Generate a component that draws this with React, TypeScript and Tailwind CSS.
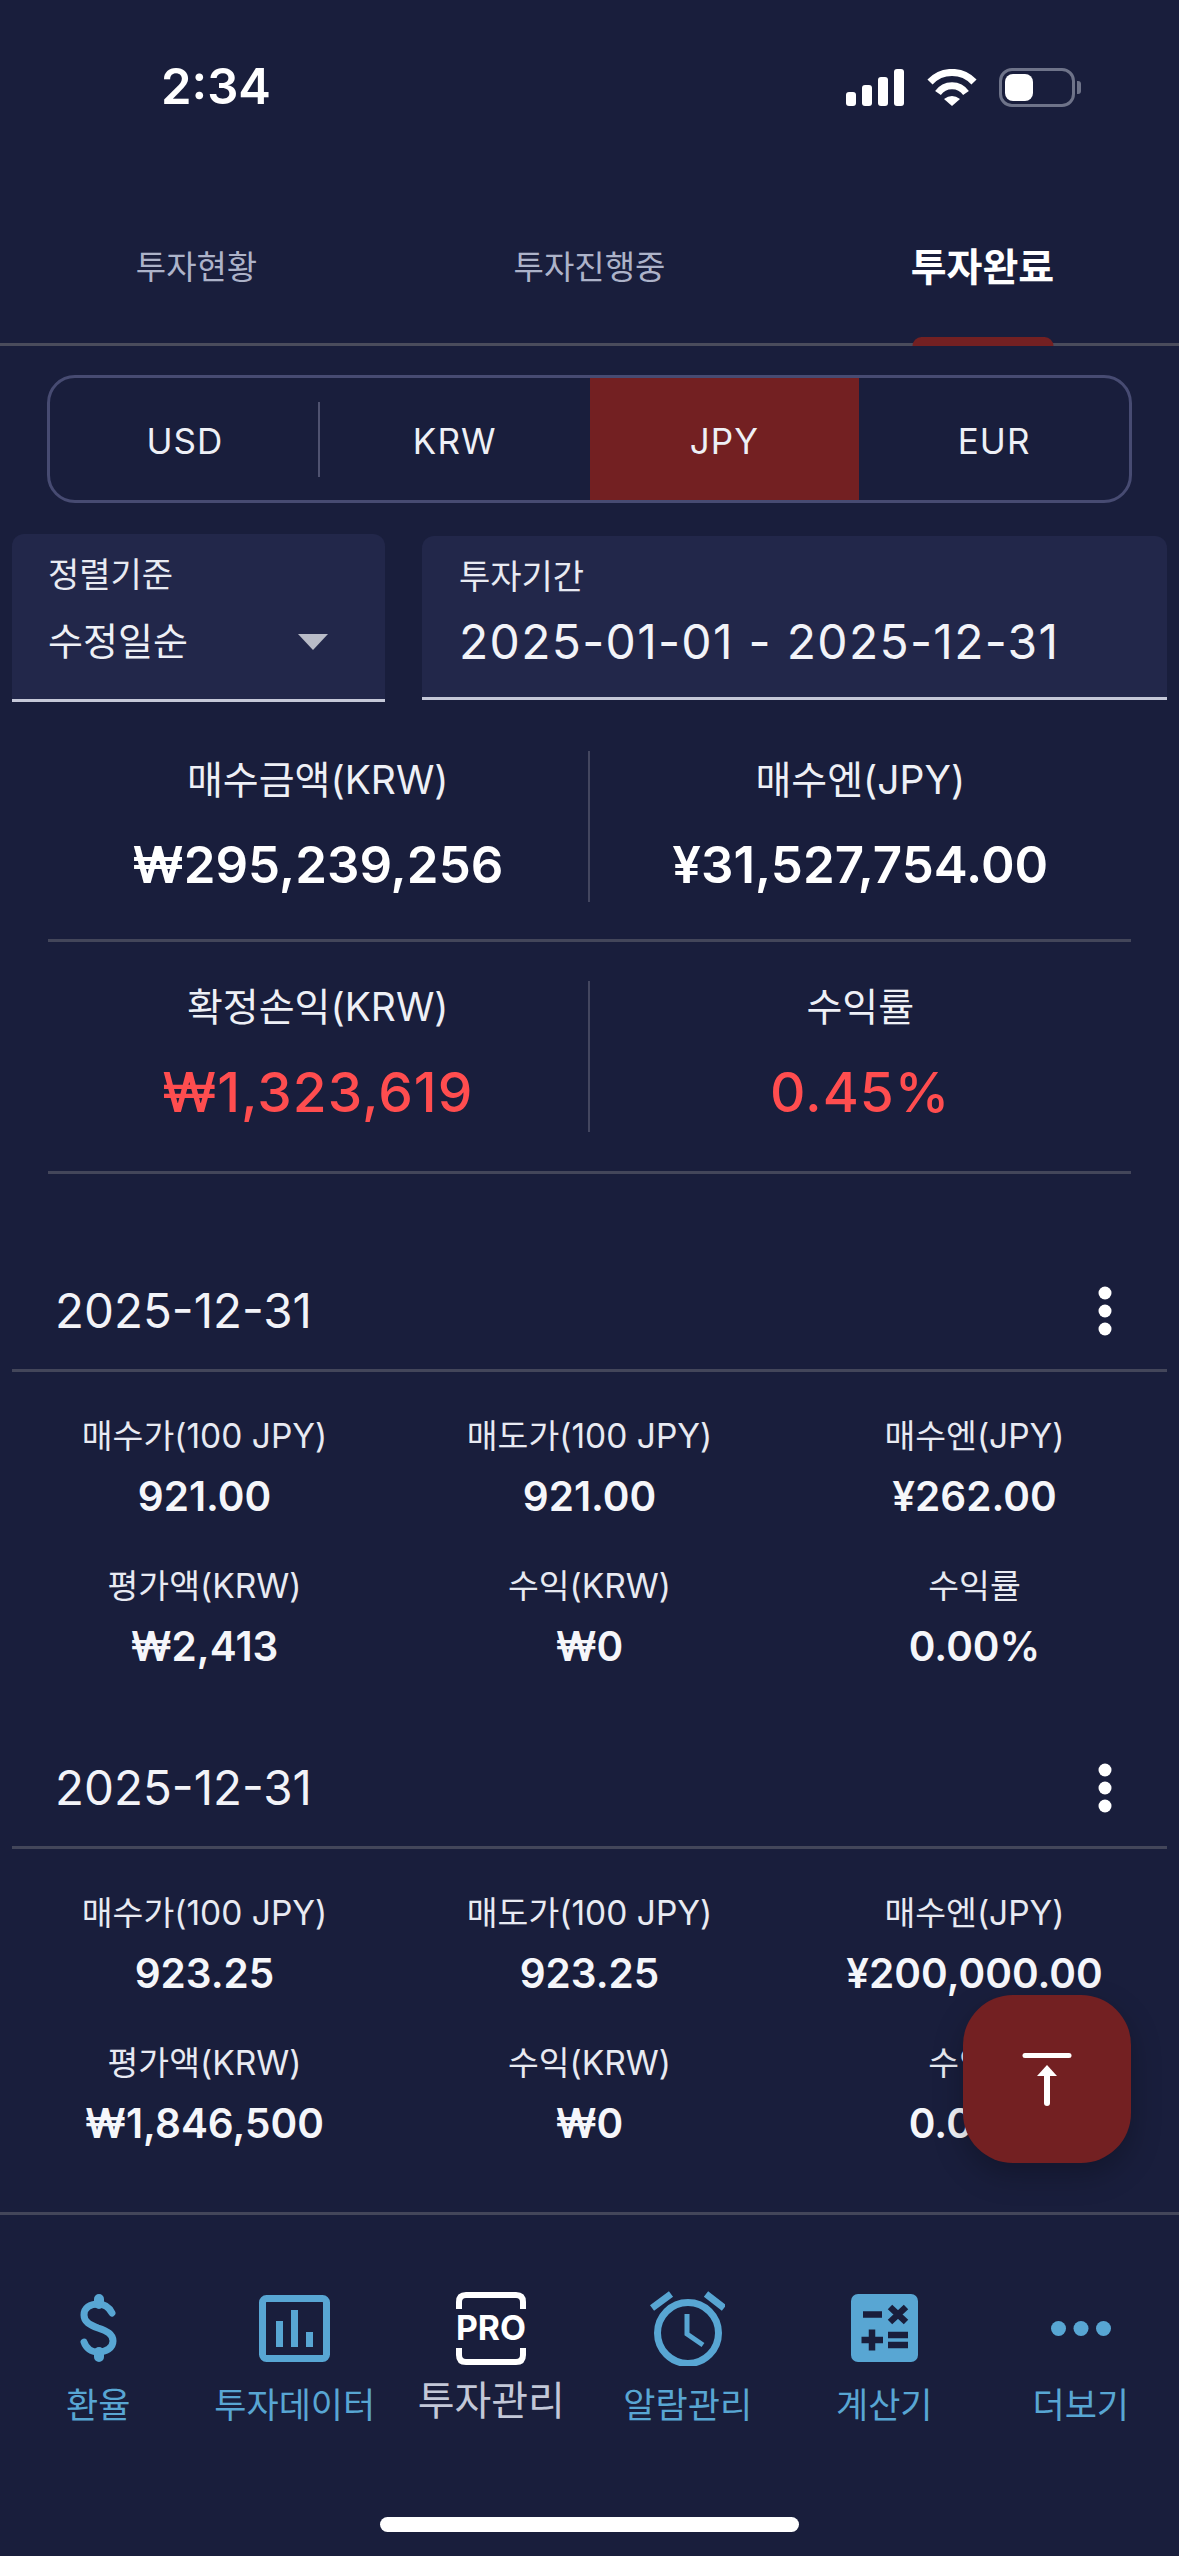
const FONT = "font-['Inter','Noto_Sans_CJK_KR',sans-serif]";

const RECORDS = [
  {
    date: '2025-12-31',
    cells: [
      { label: '매수가(100 JPY)', value: '921.00' },
      { label: '매도가(100 JPY)', value: '921.00' },
      { label: '매수엔(JPY)', value: '¥262.00' },
      { label: '평가액(KRW)', value: '₩2,413' },
      { label: '수익(KRW)', value: '₩0' },
      { label: '수익률', value: '0.00%' },
    ],
  },
  {
    date: '2025-12-31',
    cells: [
      { label: '매수가(100 JPY)', value: '923.25' },
      { label: '매도가(100 JPY)', value: '923.25' },
      { label: '매수엔(JPY)', value: '¥200,000.00' },
      { label: '평가액(KRW)', value: '₩1,846,500' },
      { label: '수익(KRW)', value: '₩0' },
      { label: '수익률', value: '0.00%' },
    ],
  },
];

function StatusIcons() {
  return (
    <div className="flex items-center">
      <svg width="58" height="37" viewBox="0 0 58 37" fill="#fff">
        <rect x="0" y="23" width="10" height="14" rx="3" />
        <rect x="16" y="16" width="10" height="21" rx="3" />
        <rect x="32" y="8" width="10" height="29" rx="3" />
        <rect x="48" y="0" width="10" height="37" rx="3" />
      </svg>
      <svg className="ml-[23px]" width="50" height="37" viewBox="0 0 50 37" fill="none" stroke="#fff" strokeWidth="7">
        <path d="M3 13 A30 30 0 0 1 47 13" />
        <path d="M11 24 A17 17 0 0 1 39 24" />
        <path d="M17 30 Q25 24 33 30 L25 37 Z" fill="#fff" stroke="none" />
      </svg>
      <div className="relative ml-[22px] h-[39px] w-[76px] rounded-[13px] border-[3px] border-[#6e7389] p-[3px]">
        <div className="h-full w-[28px] rounded-[8px] bg-white" />
        <div className="absolute top-[10px] right-[-9px] h-[13px] w-[4px] rounded-r-[3px] bg-[#6e7389]" />
      </div>
    </div>
  );
}

function Tabs() {
  return (
    <div className="grid h-[156px] grid-cols-3 border-b-[3px] border-[#4a4c5c]">
      <div className="flex items-center justify-center pt-[2px] text-[33px] text-[#adb3c9]">투자현황</div>
      <div className="flex items-center justify-center pt-[2px] text-[33px] text-[#adb3c9]">투자진행중</div>
      <div className="relative flex items-center justify-center pt-[2px] text-[39px] font-bold text-white">
        투자완료
        <div className="absolute bottom-[-3px] left-1/2 h-[9px] w-[141px] -translate-x-1/2 rounded-t-[9px] bg-[#732022]" />
      </div>
    </div>
  );
}

function CurrencySwitch() {
  return (
    <div className="mx-[47px] mt-[29px] grid h-[128px] grid-cols-4 overflow-hidden rounded-[28px] border-[3px] border-[#474b72] text-[35px] tracking-[1px] text-[#eef0f6]">
      <div className="relative flex items-center justify-center pt-[5px]">
        USD
        <div className="absolute top-[24px] right-0 h-[75px] w-[2px] bg-[#4f5270]" />
      </div>
      <div className="flex items-center justify-center pt-[5px]">KRW</div>
      <div className="flex items-center justify-center bg-[#732022] pt-[5px]">JPY</div>
      <div className="flex items-center justify-center pt-[5px]">EUR</div>
    </div>
  );
}

function Filters() {
  return (
    <div className="mt-[31px] flex items-start justify-between pr-[12px] pl-[12px]">
      <div className="h-[168px] w-[373px] rounded-t-[12px] border-b-[3px] border-[#c5c8d8] bg-[#22274a] pt-[21px] pl-[36px]">
        <div className="h-[40px] text-[34px] leading-[40px] text-[#e8eaf2]">정렬기준</div>
        <div className="mt-[11px] flex h-[70px] items-center">
          <span className="text-[38px] text-[#eef0f6]">수정일순</span>
          <svg className="mt-[2px] ml-[110px]" width="30" height="16" viewBox="0 0 30 16" fill="#b9bcc8">
            <path d="M0 0H30L15 16Z" />
          </svg>
        </div>
      </div>
      <div className="mt-[2px] h-[164px] w-[745px] rounded-t-[12px] border-b-[3px] border-[#c5c8d8] bg-[#22274a] pt-[21px] pl-[37px]">
        <div className="h-[40px] text-[34px] leading-[40px] text-[#e8eaf2]">투자기간</div>
        <div className="mt-[10px] flex h-[70px] items-center text-[48px] tracking-[1.3px] text-[#f2f3f8]">
          2025-01-01 - 2025-12-31
        </div>
      </div>
    </div>
  );
}

function SummaryRow({ items, red }: { items: { label: string; value: string }[]; red?: boolean }) {
  return (
    <div className="grid h-[151px] grid-cols-2">
      {items.map((item, i) => (
        <div key={item.label} className={`flex flex-col items-center ${i === 0 ? 'border-r-[2px] border-[#43465f]' : ''}`}>
          <div className={`h-[62px] text-[39px] leading-[62px] text-[#eef0f6] ${red ? '-mt-[5px]' : '-mt-[2px]'}`}>
            {item.label}
          </div>
          <div
            className={`h-[62px] leading-[62px] ${
              red ? 'mt-[23px] text-[55px] font-medium tracking-[1px] text-[#ff4d4f]' : 'mt-[23px] text-[51px] font-semibold text-white'
            }`}
          >
            {item.value}
          </div>
        </div>
      ))}
    </div>
  );
}

function Summary() {
  return (
    <div className="mx-[48px] mt-[49px]">
      <SummaryRow
        items={[
          { label: '매수금액(KRW)', value: '₩295,239,256' },
          { label: '매수엔(JPY)', value: '¥31,527,754.00' },
        ]}
      />
      <div className="mt-[37px] h-[3px] bg-[#43465a]" />
      <div className="mt-[39px]">
        <SummaryRow
          red
          items={[
            { label: '확정손익(KRW)', value: '₩1,323,619' },
            { label: '수익률', value: '0.45%' },
          ]}
        />
      </div>
      <div className="mt-[39px] h-[3px] bg-[#43465a]" />
    </div>
  );
}

function RecordCard({ date, cells }: (typeof RECORDS)[number]) {
  return (
    <div className="mx-[12px] h-[477px]">
      <div className="flex h-[119px] items-center justify-between border-b-[3px] border-[#43465a] pr-[55px] pl-[43px]">
        <span className="text-[47.500px] text-[#f2f3f8]">{date}</span>
        <svg width="14" height="50" viewBox="0 0 14 50" fill="#fff">
          <circle cx="7" cy="7" r="6.5" />
          <circle cx="7" cy="25" r="6.5" />
          <circle cx="7" cy="43" r="6.5" />
        </svg>
      </div>
      <div className="grid grid-cols-3 gap-y-[29px] pt-[39px]">
        {cells.map((cell, i) => (
          <div key={i} className="flex flex-col items-center">
            <div className="h-[50px] text-[33.500px] leading-[50px] text-[#e8eaf2]">{cell.label}</div>
            <div className="h-[71px] text-[40.500px] leading-[71px] font-semibold text-[#f5f6fa]">{cell.value}</div>
          </div>
        ))}
      </div>
    </div>
  );
}

function DollarIcon() {
  return (
    <svg width="37" height="68" viewBox="0 0 37 68" fill="none" stroke="#58a6d3" strokeLinecap="round">
      <path strokeWidth="7" d="M32 19 C29 13 24 10 18 10 C10 10 4 14 4 21 C4 28 10 31 18 34 C27 37 33 40 33 47 C33 54 26 58 18 58 C11 58 6 54 4 48" />
      <path strokeWidth="10" d="M19 5 V10 M19 58 V63" />
    </svg>
  );
}

function ChartIcon() {
  return (
    <svg width="71" height="67" viewBox="0 0 71 67" fill="#58a6d3">
      <rect x="3.5" y="3.5" width="64" height="60" rx="4" fill="none" stroke="#58a6d3" strokeWidth="7" />
      <rect x="17" y="26" width="7" height="26" />
      <rect x="32" y="15" width="7" height="37" />
      <rect x="47" y="37" width="7" height="15" />
    </svg>
  );
}

function ProIcon() {
  return (
    <svg width="70" height="73" viewBox="0 0 70 73" fill="none" stroke="#fff" strokeWidth="6">
      <path d="M3 17 V10 Q3 3 10 3 H60 Q67 3 67 10 V17" />
      <path d="M3 56 V63 Q3 70 10 70 H60 Q67 70 67 63 V56" />
      <text x="0" y="48" textLength="70" lengthAdjust="spacingAndGlyphs" fill="#fff" stroke="none" fontSize="34" fontWeight="700" fontFamily="Inter, sans-serif">
        PRO
      </text>
    </svg>
  );
}

function AlarmIcon() {
  return (
    <svg width="75" height="75" viewBox="0 0 75 75" fill="none" stroke="#58a6d3">
      <circle cx="38" cy="42" r="30.5" strokeWidth="7" />
      <path strokeWidth="5" d="M37 23 V43 L53 54" />
      <path strokeWidth="7" d="M2 17 L21 3 M56 3 L74 17" />
    </svg>
  );
}

function CalcIcon() {
  return (
    <svg width="67" height="68" viewBox="0 0 67 68">
      <rect width="67" height="68" rx="7" fill="#58a6d3" />
      <path stroke="#191e3c" strokeWidth="6.5" fill="none" d="M12 20.5 H31 M39 13 L55 28 M55 13 L39 28 M10.500 46 H32 M21 35.500 V56.500 M37 41 H57 M37 51 H57" />
    </svg>
  );
}

function MoreIcon() {
  return (
    <svg width="60" height="15" viewBox="0 0 60 15" fill="#58a6d3">
      <circle cx="7.500" cy="7.500" r="7.500" />
      <circle cx="30" cy="7.500" r="7.500" />
      <circle cx="52.500" cy="7.500" r="7.500" />
    </svg>
  );
}

const NAV_ITEMS = [
  { label: '환율', icon: <DollarIcon /> },
  { label: '투자데이터', icon: <ChartIcon /> },
  { label: '투자관리', icon: <ProIcon />, active: true },
  { label: '알람관리', icon: <AlarmIcon /> },
  { label: '계산기', icon: <CalcIcon /> },
  { label: '더보기', icon: <MoreIcon /> },
];

function BottomNav() {
  return (
    <div className="mt-auto flex h-[344px] flex-col border-t-[3px] border-[#43465a]">
      <div className="grid grid-cols-6 pt-[75px]">
        {NAV_ITEMS.map((item) => (
          <div key={item.label} className="flex flex-col items-center">
            <div className="flex h-[76px] items-center justify-center">{item.icon}</div>
            {item.active ? (
              <div className="mt-[10px] h-[50px] text-[40px] leading-[50px] text-[#c3c8d8]">{item.label}</div>
            ) : (
              <div className="mt-[14px] h-[50px] text-[35px] leading-[50px] text-[#58a6d3]">{item.label}</div>
            )}
          </div>
        ))}
      </div>
      <div className="mt-auto mb-[24px] h-[15px] w-[419px] self-center rounded-full bg-white" />
    </div>
  );
}

export default function App() {
  return (
    <div className={`relative flex h-[2556px] w-[1179px] flex-col overflow-hidden bg-[#191e3c] ${FONT}`}>
      {/* 상태바 */}
      <div className="flex h-[190px] items-start justify-between pt-[58px] pr-[104px] pl-[161px]">
        <span className="text-[49px] leading-[58px] font-semibold text-white">2:34</span>
        <div className="pt-[10px]">
          <StatusIcons />
        </div>
      </div>
      <Tabs />
      <CurrencySwitch />
      <Filters />
      <Summary />
      <div className="mt-[79px]">
        {RECORDS.map((record, i) => (
          <RecordCard key={i} date={record.date} cells={record.cells} />
        ))}
      </div>
      <BottomNav />

      {/* 맨 위로 버튼 */}
      <div className="absolute top-[1995px] left-[963px] h-[168px] w-[168px] rounded-[50px] bg-[#732022] shadow-[0_12px_30px_rgba(0,0,0,0.25)]">
        <svg width="168" height="168" viewBox="0 0 168 168" fill="none" stroke="#fff" strokeLinecap="round">
          <path strokeWidth="5" d="M62 60.500 H106" />
          <path strokeWidth="6" d="M84 80 V108" />
          <path fill="#fff" stroke="none" d="M84 70 L94 81 H74 Z" />
        </svg>
      </div>
    </div>
  );
}
